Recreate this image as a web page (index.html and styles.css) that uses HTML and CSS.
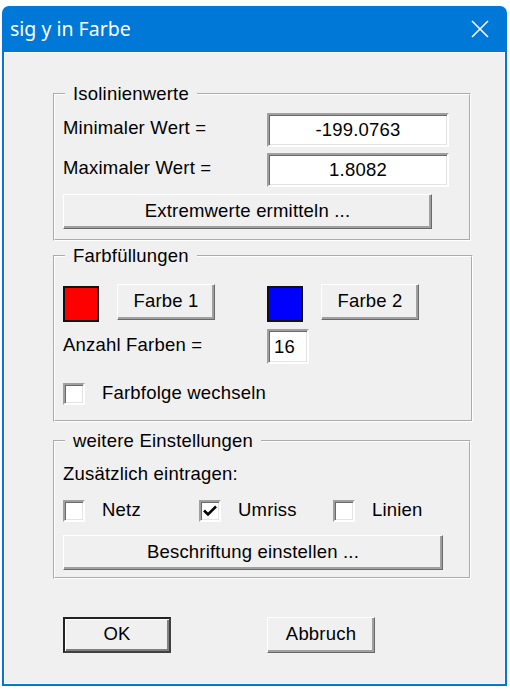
FILE: index.html
```html
<!DOCTYPE html>
<html lang="de">
<head>
<meta charset="utf-8">
<title>sig y in Farbe</title>
<link rel="stylesheet" href="styles.css">
</head>
<body>
<div class="window">
  <div class="titlebar">
    <span class="title">sig y in Farbe</span>
    <svg class="close" width="18" height="18" viewBox="0 0 18 18"><path d="M1 1 L17 17 M17 1 L1 17" stroke="#fff" stroke-width="1.6" fill="none"/></svg>
  </div>
  <div class="client">
    <fieldset class="group g1">
      <legend>Isolinienwerte</legend>
      <div class="row r1">
        <span class="label">Minimaler Wert =</span>
        <div class="field value">-199.0763</div>
      </div>
      <div class="row r2">
        <span class="label">Maximaler Wert =</span>
        <div class="field value">1.8082</div>
      </div>
      <button class="btn extrem">Extremwerte ermitteln ...</button>
    </fieldset>

    <fieldset class="group g2">
      <legend>Farbfüllungen</legend>
      <div class="colors">
        <div class="colorpick">
          <span class="swatch red"></span>
          <button class="btn farbe">Farbe 1</button>
        </div>
        <div class="colorpick">
          <span class="swatch blue"></span>
          <button class="btn farbe">Farbe 2</button>
        </div>
      </div>
      <div class="row anzahl">
        <span class="label">Anzahl Farben =</span>
        <div class="field count">16</div>
      </div>
      <label class="check folge"><span class="box"></span><span class="ctext">Farbfolge wechseln</span></label>
    </fieldset>

    <fieldset class="group g3">
      <legend>weitere Einstellungen</legend>
      <div class="plain">Zusätzlich eintragen:</div>
      <div class="checks">
        <label class="check c-netz"><span class="box"></span><span class="ctext">Netz</span></label>
        <label class="check c-umriss"><span class="box"><svg width="18" height="18" viewBox="0 0 18 18"><path d="M3 8.5 L7 12.5 L15 4.5" stroke="#000" stroke-width="2.6" fill="none"/></svg></span><span class="ctext">Umriss</span></label>
        <label class="check c-linien"><span class="box"></span><span class="ctext">Linien</span></label>
      </div>
      <button class="btn beschr">Beschriftung einstellen ...</button>
    </fieldset>

    <div class="actions">
      <button class="btn default">OK</button>
      <button class="btn cancel">Abbruch</button>
    </div>
  </div>
</div>
</body>
</html>
```

FILE: styles.css
```css
* { box-sizing: border-box; }

html, body {
  margin: 0;
  background: #ffffff;
}

body {
  padding: 6px 0 0 2px;
  font-family: "Liberation Sans", Arial, sans-serif;
  font-size: 18.5px;
  letter-spacing: 0.2px;
  color: #000;
}

.window {
  width: 505px;
  height: 680px;
  display: flex;
  flex-direction: column;
  background: #0078d7;
  border-radius: 7px 7px 0 0;
  padding: 0 2px 2px 2px;
}

.titlebar {
  height: 46px;
  flex: none;
  display: flex;
  align-items: center;
  justify-content: space-between;
  padding: 0 16px 0 6px;
}

.title {
  font-family: "Noto Sans", "Open Sans", sans-serif;
  font-size: 19.5px;
  letter-spacing: 0;
  color: #fff;
  position: relative;
  top: -1px;
}

.close {
  display: block;
}

.client {
  flex: 1;
  background: #f0f0f0;
  border: 1px solid #fff;
  border-right-color: #f4f4f4;
  padding: 31px 0 0 48px;
  display: flex;
  flex-direction: column;
  align-items: flex-start;
}

.group {
  margin: 0;
  width: 418px;
  border: 2px groove #fff;
  padding: 0 0 0 8px;
  display: flex;
  flex-direction: column;
  align-items: flex-start;
}

.group legend {
  margin-left: 2px;
  padding: 0 8px;
  line-height: 20px;
  height: 20px;
}

.g1 { padding-top: 9px; padding-bottom: 10px; }
.g2 { margin-top: 5px; padding-top: 18px; padding-bottom: 15px; }
.g3 { margin-top: 9px; padding-top: 13px; padding-bottom: 7px; }

.row {
  display: flex;
  align-items: center;
}

.label {
  width: 204px;
  flex: none;
  position: relative;
  top: -2px;
}

.r1 { height: 34px; }
.r2 { height: 34px; margin-top: 6px; }

.field {
  background: #fff;
  border: 2px solid;
  border-color: #a0a0a0 #fff #fff #a0a0a0;
  box-shadow: inset 1px 1px 0 #696969, inset -1px -1px 0 #e3e3e3;
  display: flex;
  align-items: center;
}

.value {
  width: 182px;
  height: 34px;
  justify-content: center;
}

.count {
  width: 42px;
  height: 35px;
  padding-left: 5px;
}

.btn {
  font: inherit;
  letter-spacing: inherit;
  color: #000;
  background: #f0f0f0;
  border: 1px solid;
  border-color: #fff #696969 #696969 #fff;
  box-shadow: inset -2px -2px 0 #a0a0a0;
  padding: 0 0 2px 0;
  margin: 0;
  display: flex;
  align-items: center;
  justify-content: center;
}

.extrem {
  width: 369px;
  height: 35px;
  margin-top: 7px;
}

.colors {
  display: flex;
  height: 38px;
}

.colorpick {
  display: flex;
  align-items: flex-start;
  gap: 18px;
  width: 204px;
}

.swatch {
  width: 36px;
  height: 36px;
  margin-top: 2px;
  border: 2px solid #111;
  flex: none;
}

.red { background: #ff0000; }
.blue { background: #0000ff; }

.farbe {
  width: 98px;
  height: 36px;
}

.anzahl {
  margin-top: 7px;
  height: 35px;
}

.check {
  display: flex;
  align-items: center;
  height: 22px;
}

.box {
  width: 22px;
  height: 22px;
  flex: none;
  background: #fff;
  border: 2px solid;
  border-color: #a0a0a0 #fff #fff #a0a0a0;
  box-shadow: inset 1px 1px 0 #696969, inset -1px -1px 0 #e3e3e3;
  display: flex;
  align-items: center;
  justify-content: center;
}

.box svg { display: block; }

.ctext {
  margin-left: 17px;
  position: relative;
  top: -1px;
}

.folge { margin-top: 19px; }

.plain {
  line-height: 22px;
  position: relative;
  top: -1px;
}

.checks {
  display: flex;
  margin-top: 14px;
}

.c-netz { width: 136px; }
.c-umriss { width: 134px; }

.beschr {
  width: 380px;
  height: 35px;
  margin-top: 13px;
}

.actions {
  display: flex;
  margin-top: 38px;
  padding-left: 10px;
}

.default {
  width: 108px;
  height: 36px;
  border: 2px solid;
  border-color: #222 #404040 #404040 #222;
  box-shadow: inset 1px 1px 0 #fff, inset -2px -2px 0 #808080;
}

.cancel {
  width: 108px;
  height: 36px;
  margin-left: 96px;
}
```
